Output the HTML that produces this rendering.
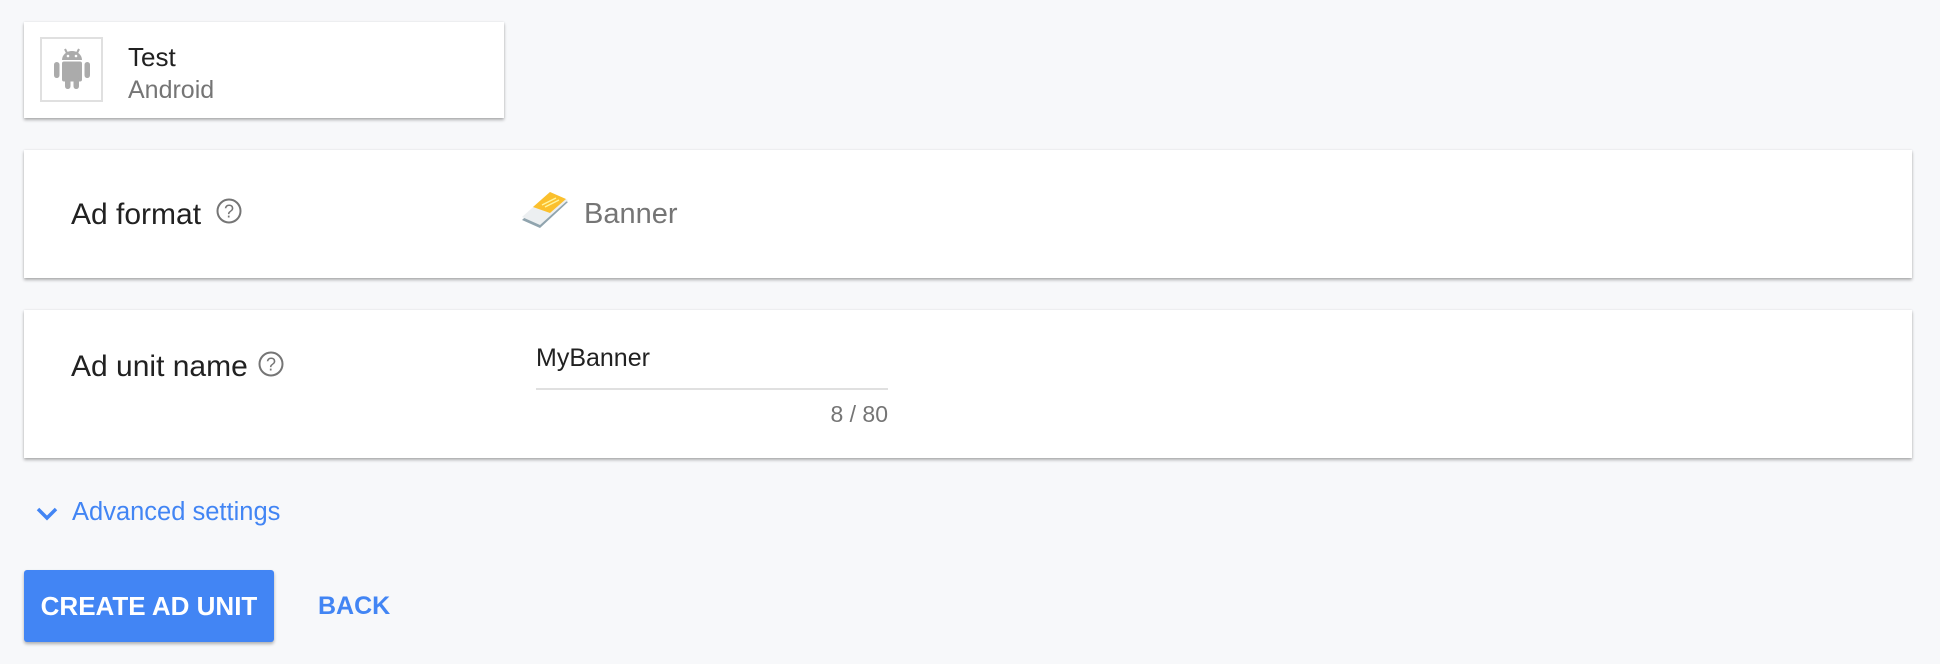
<!DOCTYPE html>
<html><head><meta charset="utf-8"><style>
html,body{margin:0;padding:0;}
body{width:1940px;height:664px;background:#f7f8fa;font-family:"Liberation Sans",Arial,sans-serif;position:relative;overflow:hidden;}
.card{position:absolute;background:#fff;box-shadow:0 2px 3px rgba(0,0,0,.3),0 0 2px rgba(0,0,0,.08);}
.t{position:absolute;white-space:nowrap;line-height:1;}
.q{position:absolute;}
</style></head><body>
<div class="card" style="left:24px;top:22px;width:480px;height:96px;">
  <div style="position:absolute;left:16px;top:15px;width:59px;height:61px;border:2px solid #e0e0e0;"></div>
  <svg style="position:absolute;left:28px;top:25px" width="40" height="45" viewBox="0 0 40 45">
    <g fill="#ababab">
    <path d="M10 13 a10 9 0 0 1 20 0 z"/>
    <rect x="10" y="14.5" width="20" height="20" rx="2"/>
    <rect x="2" y="15" width="5.5" height="16" rx="2.7"/>
    <rect x="32.5" y="15" width="5.5" height="16" rx="2.7"/>
    <rect x="13" y="30" width="5.5" height="12" rx="2.7"/>
    <rect x="21.5" y="30" width="5.5" height="12" rx="2.7"/>
    </g>
    <line x1="13" y1="2" x2="15" y2="6" stroke="#ababab" stroke-width="2"/>
    <line x1="27" y1="2" x2="25" y2="6" stroke="#ababab" stroke-width="2"/>
    <circle cx="16" cy="9" r="1.3" fill="#fff"/><circle cx="24" cy="9" r="1.3" fill="#fff"/>
  </svg>
  <div class="t" style="left:104px;top:22px;font-size:26px;color:#212121;">Test</div>
  <div class="t" style="left:104px;top:56px;font-size:25px;color:#757575;">Android</div>
</div>
<div class="card" style="left:24px;top:150px;width:1888px;height:128px;">
  <div class="t" style="left:47px;top:50px;font-size:30px;color:#212121;">Ad format</div>
  <svg class="q" style="left:192px;top:48px" width="26" height="26" viewBox="0 0 26 26"><circle cx="13" cy="13" r="11.5" fill="none" stroke="#757575" stroke-width="2"/><text x="13" y="19.5" text-anchor="middle" font-family="Liberation Sans,sans-serif" font-size="18" fill="#757575">?</text></svg>
  <svg style="position:absolute;left:496px;top:42px" width="50" height="38" viewBox="0 0 50 38">
    <path d="M2 28 L30 2 L48 10 L20 36 Z" fill="#90a4ae"/>
    <path d="M2 25 L30 0 L48 8 L20 33 Z" fill="#eceff1"/>
    <path d="M13 15 L30 0 L46 7 L30 21 Z" fill="#fbc02d"/>
    <path d="M22 13 L36 6 M25 15 L39 8" stroke="#fff59d" stroke-width="1.5"/>
  </svg>
  <div class="t" style="left:560px;top:50px;font-size:29px;color:#757575;">Banner</div>
</div>
<div class="card" style="left:24px;top:310px;width:1888px;height:148px;">
  <div class="t" style="left:47px;top:42px;font-size:30px;color:#212121;">Ad unit name</div>
  <svg class="q" style="left:234px;top:41px" width="26" height="26" viewBox="0 0 26 26"><circle cx="13" cy="13" r="11.5" fill="none" stroke="#757575" stroke-width="2"/><text x="13" y="19.5" text-anchor="middle" font-family="Liberation Sans,sans-serif" font-size="18" fill="#757575">?</text></svg>
  <div class="t" style="left:512px;top:36px;font-size:25px;color:#212121;">MyBanner</div>
  <div style="position:absolute;left:512px;top:78px;width:352px;height:2px;background:#e0e0e0;"></div>
  <div class="t" style="left:764px;top:93px;width:100px;text-align:right;font-size:23px;color:#757575;">8 / 80</div>
</div>
<svg style="position:absolute;left:36px;top:506px" width="22" height="16" viewBox="0 0 22 16"><path d="M2 3 L11 12 L20 3" fill="none" stroke="#4285f4" stroke-width="3.5"/></svg>
<div class="t" style="left:72px;top:500px;font-size:25.5px;color:#4285f4;">Advanced settings</div>
<div style="position:absolute;left:24px;top:570px;width:250px;height:72px;background:#4285f4;border-radius:3px;box-shadow:0 2px 3px rgba(0,0,0,.3);"></div>
<div class="t" style="left:24px;top:593px;width:250px;text-align:center;font-size:26px;color:#fff;font-weight:bold;">CREATE AD UNIT</div>
<div class="t" style="left:318px;top:594px;font-size:25px;color:#4285f4;font-weight:bold;">BACK</div>
</body></html>
